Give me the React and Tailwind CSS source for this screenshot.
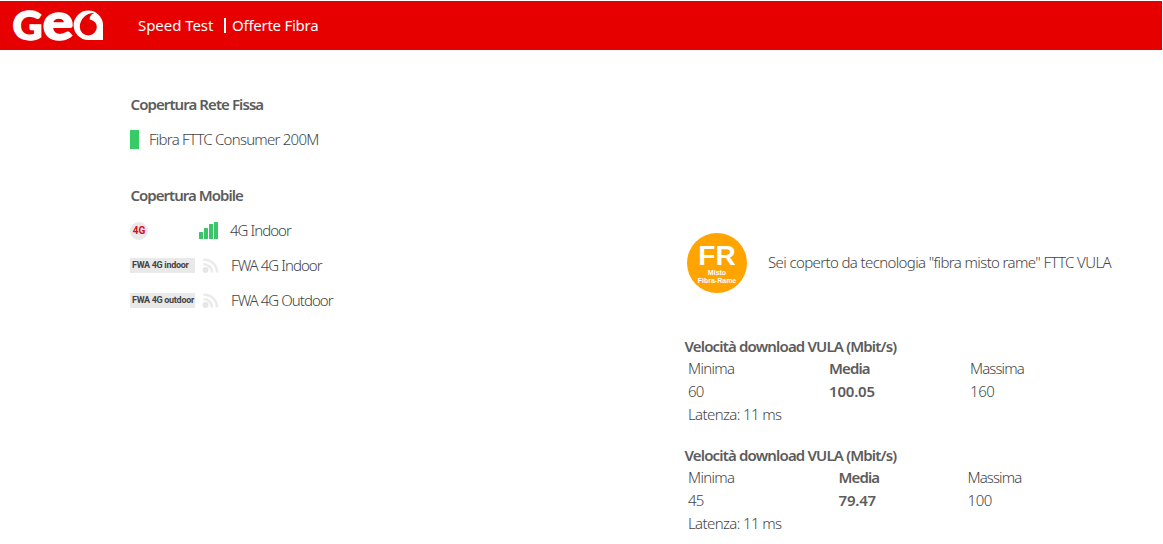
const speeds = [
  { min: '60', avg: '100.05', max: '160', latency: '11 ms', cols: 'grid-cols-[141px_141px_1fr]' },
  { min: '45', avg: '79.47', max: '100', latency: '11 ms', cols: 'grid-cols-[150.5px_129px_1fr]' },
]

const GeaLogo = () => (
  <svg width="92" height="32" viewBox="0 0 92 32" className="block overflow-visible" fill="#fff">
    <g fontFamily="Lato, sans-serif" fontWeight="900" stroke="#fff" strokeWidth="1.4">
      <text x="0.5" y="29.5" fontSize="39" textLength="30" lengthAdjust="spacingAndGlyphs">G</text>
      <text x="30.500" y="29.5" fontSize="52" textLength="31" lengthAdjust="spacingAndGlyphs">e</text>
    </g>
    <path d="M91 15.500v14.500H76.500a14.700 14.700 0 1 1 14.500-14.500z" />
    <path d="M82.500 3C78.500 4.500 77.500 7 77.800 9.500c4 .8 7 3.600 7 7.500a8.500 8.500 0 0 1-17 0C67.800 8.500 75 2.500 82.500 3z" fill="#e60000" />
  </svg>
)

const Header = () => (
  <header className="h-[49px] mr-px flex items-center bg-[#e60000] text-white font-normal">
    <div className="ml-3">
      <GeaLogo />
    </div>
    <nav className="ml-[34px] flex items-center">
      <a className="w-[86px] tracking-[-0.050px]">Speed Test</a>
      <span className="w-[1.500px] h-[15px] bg-white mr-[6.500px]" />
      <a className="tracking-[-0.250px]">Offerte Fibra</a>
    </nav>
  </header>
)

const SignalBars = () => (
  <svg width="19" height="17" viewBox="0 0 19 17" fill="#3cc468">
    <rect x="0" y="10" width="4" height="7" rx="0.500" />
    <rect x="5" y="6" width="4" height="11" rx="0.500" />
    <rect x="10" y="2" width="4" height="15" rx="0.500" />
    <rect x="15" y="0" width="4" height="17" rx="0.500" />
  </svg>
)

const WirelessIcon = () => (
  <svg width="17" height="16" viewBox="0 0 17 16" fill="none" stroke="#ebebeb" strokeWidth="2.600">
    <circle cx="3.500" cy="12" r="3" fill="#e6e6e6" stroke="none" />
    <path d="M1.500 6.300a8 8 0 0 1 8.500 8.200" />
    <path d="M1.500 1.800a12.500 12.500 0 0 1 13.500 12.700" />
  </svg>
)

const FwaRow = ({ badge, label }) => (
  <div className="h-[35px] flex items-center">
    <span className="w-[65px] h-[15px] pl-0.5 bg-[#e9e9e9] text-[#444] font-['Roboto',sans-serif] text-[9px] leading-[15px] font-bold tracking-[-0.300px] whitespace-nowrap">
      {badge}
    </span>
    <span className="ml-[7px] w-[29px]">
      <WirelessIcon />
    </span>
    <span className="tracking-[-0.950px]">{label}</span>
  </div>
)

const SpeedTable = ({ speed }) => (
  <div>
    <h3 className="font-semibold h-[22px] leading-[22px] text-[#5c5c5c] tracking-[-0.830px]">
      Velocità download VULA (Mbit/s)
    </h3>
    <div className={`grid ${speed.cols} pl-[3.500px] leading-[23px] tracking-[-0.700px]`}>
      <span>Minima</span>
      <span className="font-semibold text-[#5c5c5c] tracking-[-0.900px]">Media</span>
      <span className="tracking-[-0.900px]">Massima</span>
      <span>{speed.min}</span>
      <span className="font-semibold text-[#5c5c5c] tracking-[-0.200px]">{speed.avg}</span>
      <span className="tracking-[-0.400px]">{speed.max}</span>
      <span className="tracking-[-0.620px]">Latenza: {speed.latency}</span>
    </div>
  </div>
)

const App = () => {
  return (
    <div className="h-[544px] pt-px bg-white font-['Noto_Sans',sans-serif] text-[15px] font-light text-[#444]">
      <Header />
      <main className="flex">
        <section className="w-[684.5px] pl-[130px] pt-[37px]">
          <h2 className="h-[35px] leading-[35px] pl-[0.500px] font-semibold text-[#5c5c5c] tracking-[-0.920px]">
            Copertura Rete Fissa
          </h2>
          <div className="h-[35px] flex items-center">
            <span className="w-[9px] h-[19px] bg-[#37cb66] mr-2.5" />
            <span className="tracking-[-0.760px]">Fibra FTTC Consumer 200M</span>
          </div>

          <h2 className="mt-[21px] h-[35px] leading-[35px] pl-[0.500px] font-semibold text-[#5c5c5c] tracking-[-0.980px]">
            Copertura Mobile
          </h2>
          <div className="h-[35px] flex items-center">
            <span className="w-[18px] h-[18px] rounded-full bg-[#e9e9e9] text-[#d0101c] font-['Roboto',sans-serif] text-[10px] leading-[18px] font-bold text-center">
              4G
            </span>
            <span className="ml-[51px] w-[31px]">
              <SignalBars />
            </span>
            <span className="tracking-[-0.950px]">4G Indoor</span>
          </div>
          <FwaRow badge="FWA 4G indoor" label="FWA 4G Indoor" />
          <FwaRow badge="FWA 4G outdoor" label="FWA 4G Outdoor" />
        </section>

        <section className="flex-1 pt-[183px]">
          <div className="flex items-center pl-[2.500px] h-[60px]">
            <div className="w-[60px] h-[60px] rounded-full bg-[#ffa400] text-white font-['Liberation_Sans',sans-serif] font-bold text-center">
              <p className="text-[28px] leading-[32px] pt-[7px]">FR</p>
              <p className="text-[7px] leading-[8px] -mt-[3px]">Misto</p>
              <p className="text-[7px] leading-[8px]">Fibra-Rame</p>
            </div>
            <p className="ml-[21px] -mt-0.5 tracking-[-0.620px] whitespace-nowrap">
              Sei coperto da tecnologia "fibra misto rame" FTTC VULA
            </p>
          </div>
          <div className="mt-[42px] flex flex-col gap-[18px]">
            {speeds.map((speed) => (
              <SpeedTable key={speed.avg} speed={speed} />
            ))}
          </div>
        </section>
      </main>
    </div>
  )
}

export default App
